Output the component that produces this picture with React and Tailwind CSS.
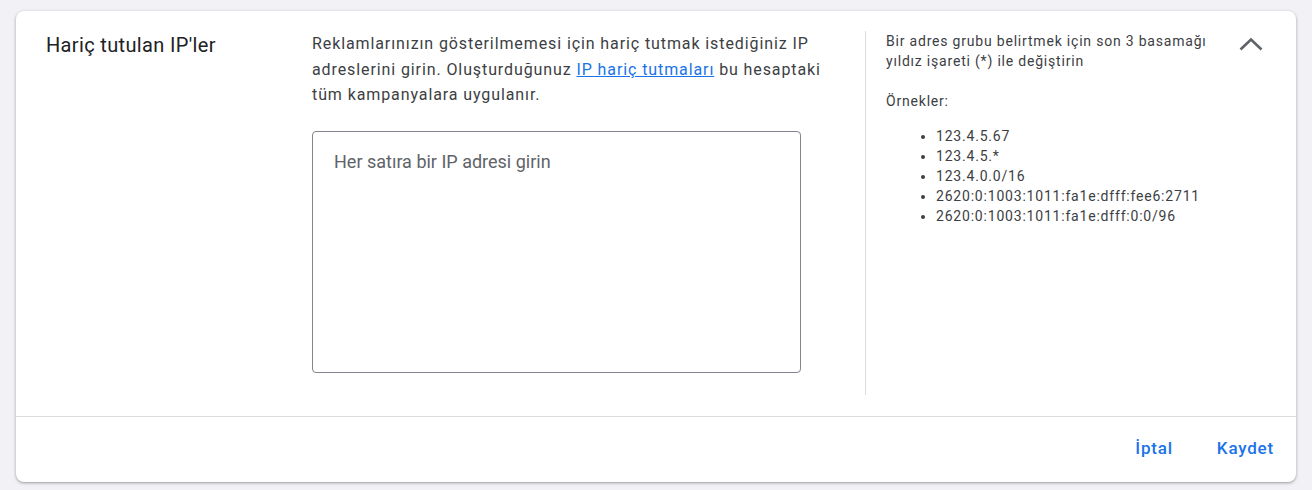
import React from "react";

export default function App() {
  const examples = [
    "123.4.5.67",
    "123.4.5.*",
    "123.4.0.0/16",
    "2620:0:1003:1011:fa1e:dfff:fee6:2711",
    "2620:0:1003:1011:fa1e:dfff:0:0/96",
  ];
  return (
    <div
      className="min-h-[490px] bg-[#f2f1f5] pt-[11px] px-4"
      style={{ fontFamily: "Roboto, 'Noto Sans', sans-serif" }}
    >
      <div className="rounded-lg bg-white shadow-[0_1px_2px_rgba(60,64,67,0.3),0_1px_3px_1px_rgba(60,64,67,0.15)]">
        <div className="flex pt-5 pb-[21px]">
          <div className="w-[296px] shrink-0 pl-[30px]">
            <h2 className="text-[20px] leading-[28px] font-normal tracking-[0.35px] text-[#202124]">
              Hariç tutulan IP'ler
            </h2>
          </div>
          <div className="w-[553px] shrink-0 pb-[22px]">
            <p className="w-[530px] text-[16px] leading-[25.5px] tracking-[0.9px] text-[#3c4043]">
              Reklamlarınızın gösterilmemesi için hariç tutmak istediğiniz IP
              adreslerini girin. Oluşturduğunuz{" "}
              <a href="#" className="text-[#1a73e8] underline">
                IP hariç tutmaları
              </a>{" "}
              bu hesaptaki tüm kampanyalara uygulanır.
            </p>
            <textarea
              className="mt-[23px] block h-[242px] w-[489px] resize-none rounded border border-[#80868b] px-[21px] py-[18px] text-[18px] leading-[24px] text-[#202124] placeholder:text-[#5f6368] outline-none"
              placeholder="Her satıra bir IP adresi girin"
            />
          </div>
          <div className="flex flex-1 justify-between border-l border-[#dadce0] pl-5 pr-[33px]">
            <div className="w-[334px] text-[14px] leading-[20px] tracking-[0.8px] text-[#3c4043]">
              <p>
                Bir adres grubu belirtmek için son 3 basamağı yıldız işareti (*)
                ile değiştirin
              </p>
              <p className="mt-5">Örnekler:</p>
              <ul className="mt-[15px] list-disc pl-[50px] tracking-[0.8px]">
                {examples.map((e) => (
                  <li key={e}>{e}</li>
                ))}
              </ul>
            </div>
            <svg
              width="24"
              height="24"
              viewBox="0 0 24 24"
              className="mt-[2px] shrink-0"
            >
              <polyline
                points="1.5,16.5 12,6.5 22.5,16.5"
                fill="none"
                stroke="#5f6368"
                strokeWidth="2.6"
              />
            </svg>
          </div>
        </div>
        <div className="flex h-[66px] items-center justify-end gap-7 border-t border-[#dadce0] pr-[14px]">
          <button className="px-2 text-[17px] font-medium tracking-[0.8px] text-[#1a73e8]">
            İptal
          </button>
          <button className="px-2 text-[17px] font-medium tracking-[0.8px] text-[#1a73e8]">
            Kaydet
          </button>
        </div>
      </div>
    </div>
  );
}
